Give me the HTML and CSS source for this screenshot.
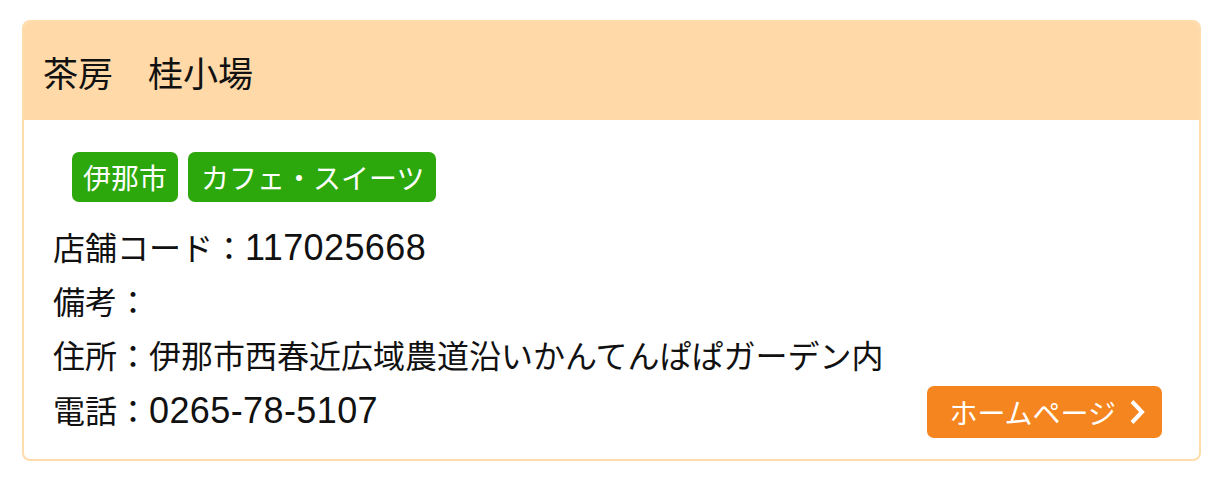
FILE: index.html
```html
<!DOCTYPE html>
<html lang="ja">
<head>
<meta charset="utf-8">
<title>茶房　桂小場</title>
<link rel="stylesheet" href="styles.css">
</head>
<body>
<div class="page">
  <div class="card">
    <div class="card-head">
      <h2 class="title">茶房　桂小場</h2>
    </div>
    <div class="card-body">
      <div class="tags">
        <span class="tag">伊那市</span>
        <span class="tag">カフェ・スイーツ</span>
      </div>
      <div class="info">
        <div class="row">店舗コード：<span class="num">117025668</span></div>
        <div class="row">備考：</div>
        <div class="row">住所：伊那市西春近広域農道沿いかんてんぱぱガーデン内</div>
        <div class="row row-last">
          <span>電話：<span class="num">0265-78-5107</span></span>
          <a class="btn" href="#">ホームページ<svg class="chev" width="16" height="26" viewBox="0 0 16 26"><polyline points="3,2.5 13,13 3,23.5" fill="none" stroke="#fff" stroke-width="4" stroke-linecap="butt" stroke-linejoin="miter"/></svg></a>
        </div>
      </div>
    </div>
  </div>
</div>
</body>
</html>
```
FILE: styles.css
```css
* { box-sizing: border-box; }
html, body { margin: 0; padding: 0; background: #fff; }
body {
  font-family: "Liberation Sans", "Noto Sans CJK JP", sans-serif;
  color: #111;
}
.page {
  padding: 20px 19px 0 22px;
}
.card {
  border: 2px solid #ffdcab;
  border-radius: 8px;
  overflow: hidden;
  background: #fff;
}
.card-head {
  height: 98px;
  background: #ffd9a7;
  display: flex;
  align-items: center;
  padding-left: 19px;
}
.title {
  margin: 0;
  font-size: 35px;
  font-weight: normal;
  line-height: 1;
  font-family: "Noto Sans CJK JP", sans-serif;
}
.card-body {
  padding: 32px 37px 20px 29px;
}
.tags {
  display: flex;
  gap: 10px;
  margin-left: 19px;
  margin-bottom: 19px;
}
.tag {
  height: 50px;
  line-height: 50px;
  padding: 0 11px;
  font-size: 28px;
  color: #fff;
  background: #2ca70c;
  border-radius: 7px;
  font-family: "Noto Sans CJK JP", sans-serif;
}
.tag + .tag {
  padding: 0 12px 0 13px;
}
.info {
  font-size: 32px;
}
.row {
  line-height: 54.5px;
  height: 54.5px;
}
.num {
  font-size: 36px;
  letter-spacing: 0.4px;
}
.row-last {
  display: flex;
  justify-content: space-between;
  align-items: center;
}
.btn {
  display: flex;
  align-items: center;
  gap: 13px;
  height: 52px;
  padding: 0 17px 0 22px;
  background: #f5861f;
  color: #fff;
  border-radius: 7px;
  font-size: 28px;
  line-height: 52px;
  text-decoration: none;
  font-family: "Noto Sans CJK JP", sans-serif;
}
.chev { display: block; }
```
